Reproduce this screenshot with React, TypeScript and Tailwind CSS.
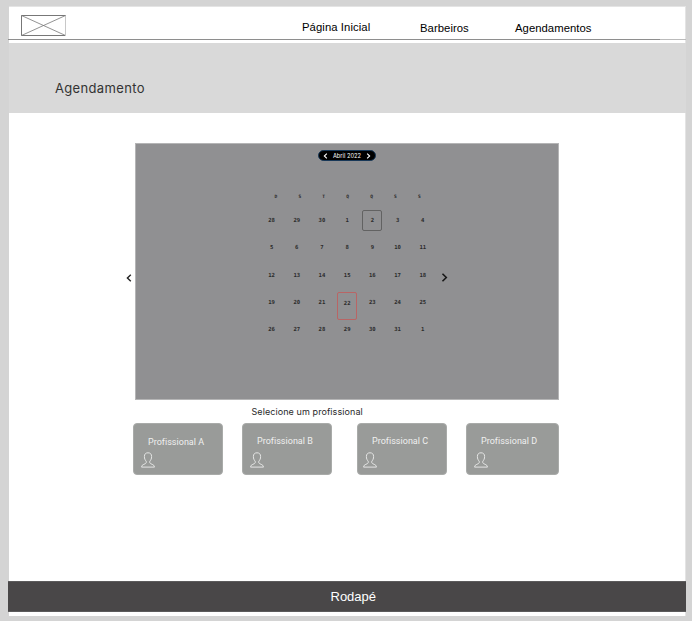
const sans = "font-['Liberation_Sans',Arial,sans-serif]";
const round = "font-[Inter,sans-serif]";

const weekdays = ["D", "S", "T", "Q", "Q", "S", "S"];
const weeks = [
  [28, 29, 30, 1, 2, 3, 4],
  [5, 6, 7, 8, 9, 10, 11],
  [12, 13, 14, 15, 16, 17, 18],
  [19, 20, 21, 22, 23, 24, 25],
  [26, 27, 28, 29, 30, 31, 1],
];

function Chevron({ dir, className, width = 1.4 }: { dir: "left" | "right"; className: string; width?: number }) {
  return (
    <svg viewBox="0 0 6 8" className={className} fill="none" stroke="currentColor" strokeWidth={width}>
      <path d={dir === "left" ? "M4.8 0.7 1.4 4 4.8 7.3" : "M1.2 0.7 4.6 4 1.2 7.3"} />
    </svg>
  );
}

function Person({ className }: { className: string }) {
  return (
    <svg viewBox="0 0 14 16" className={className} fill="none" stroke="#e4e5e4" strokeWidth="1">
      <path d="M5.200 9.200C4 8 3.400 6.600 3.400 4.600 3.400 2 4.700 .8 7 .8s3.600 1.200 3.600 3.800c0 2-.6 3.400-1.800 4.600v1.600c0 1.400 4.700 1.200 4.700 4.300H.5c0-3.100 4.700-2.900 4.700-4.300z" />
    </svg>
  );
}

function Card({ name, card, label, icon }: { name: string; card: string; label: string; icon: string }) {
  return (
    <div className={`h-[52px] rounded-[4px] border border-[#a9aba9] bg-[#999b99] ${card}`}>
      <div className={`font-[Roboto,sans-serif] text-[9px] leading-3 tracking-[0.020px] whitespace-nowrap text-[#f0f0f0] ${label}`}>{name}</div>
      <Person className={`h-4 w-3.5 ${icon}`} />
    </div>
  );
}

export default function App() {
  return (
    <div className="h-[621px] w-[692px] overflow-hidden bg-[#d4d4d4] pt-[6px]">
      <div className="ml-[9px] flex h-[610px] w-[677px] flex-col border-t border-r border-[#e4e4e4] bg-white">
        <header className={`-ml-px flex h-8 shrink-0 items-start text-[11.300px] leading-4 text-black ${sans}`}>
          <svg viewBox="0 0 45 22" className="mt-2 ml-[13px] h-[22px] w-[45px]" fill="none">
            <path d="M.5 .5 44.500 20.500M44.500 .5 .5 20.500" stroke="#777" strokeWidth=".8" />
            <path d="M.5 .5H44.500M.5 20.500H44.500M.5 .5V20.500" stroke="#777" />
            <path d="M44.500 1V21" stroke="#c8c8c8" />
          </svg>
          <nav className="flex pt-3">
            <a className="ml-[236px] w-[118px] tracking-[0.080px] whitespace-nowrap">Página Inicial</a>
            <a className="w-[95px] pt-px tracking-[0.050px]">Barbeiros</a>
            <a className="pt-px tracking-[0.040px]">Agendamentos</a>
          </nav>
        </header>
        <div className="-ml-px flex h-px w-[678px] shrink-0">
          <div className="w-[652px] bg-[#8e8e8e]" />
          <div className="flex-1 bg-[#bbbbbb]" />
        </div>
        <section className="mt-[3px] h-[70px] w-[677px] shrink-0 bg-[#d9d9d9] pt-[36px] pl-[46px]">
          <h1 className={`text-[13px] leading-[18px] tracking-[0.340px] text-[#333333] ${round}`}>Agendamento</h1>
        </section>

        <main className="flex h-[468px] shrink-0 flex-col">
          <div className="mt-[30px] flex h-[258px] items-start">
            <Chevron dir="left" className="mt-[131px] mr-[3px] ml-[117px] h-2 w-[6px] text-[#222]" />
            <div className="flex h-[257px] w-[424px] flex-col border border-[#b5b5b6] bg-[#909092]">
              <div className="mt-[6px] ml-[182px] flex h-[11px] w-[58px] items-center justify-between rounded-full border border-[#183858] bg-black px-1 text-white">
                <Chevron dir="left" className="h-[6px] w-[5px]" width={1.400} />
                <span className={`text-[5.700px] leading-[8px] tracking-[0.020px] ${round}`}>Abril 2022</span>
                <Chevron dir="right" className="h-[6px] w-[5px]" width={1.400} />
              </div>
              <div className="mt-8 ml-[128px] grid h-[8px] w-[167.300px] grid-cols-7 text-center font-['DejaVu_Sans_Mono',monospace] text-[4.600px] leading-[8px] font-bold text-[#292929]">
                {weekdays.map((day, i) => (
                  <span key={i}>{day}</span>
                ))}
              </div>
              <div className="flex">
                <div className="mt-[6px] ml-[123px] grid w-[176.400px] grid-cols-7 text-center font-['DejaVu_Sans_Mono',monospace] text-[5.600px] font-bold text-[#2b2b2b]">
                  {weeks.flat().map((day, i) => (
                    <div key={i} className="flex h-[27.250px] justify-center pt-[3px]">
                      <span
                        className={
                          i === 4
                            ? "h-[21px] w-5 shrink-0 rounded-[2px] border border-[#626262] leading-[19px]"
                            : i === 24
                              ? "h-[28px] w-[19.500px] shrink-0 rounded-[2px] border border-[#b96565] leading-[20px]"
                              : "h-[21px] leading-[21px]"
                        }
                      >
                        {day}
                      </span>
                    </div>
                  ))}
                </div>
                <Chevron dir="right" className="mt-[72px] ml-[6px] h-[9px] w-[7px] text-[#171717]" />
              </div>
            </div>
          </div>
          <p className={`mt-[5px] ml-[242.500px] text-[9px] leading-3 tracking-[0.080px] text-[#292929] ${round}`}>Selecione um profissional</p>
          <div className="mt-[5px] ml-[123.500px] flex items-start">
            <Card name="Profissional A" card="w-[90px]" label="mt-[12px] ml-[14.500px]" icon="mt-[4px] ml-[7px]" />
            <Card name="Profissional B" card="ml-[19px] w-[90px]" label="mt-[11px] ml-[14.500px]" icon="mt-[5px] ml-[7px]" />
            <Card name="Profissional C" card="ml-[25px] w-[90px]" label="mt-[11px] ml-[14.500px]" icon="mt-[5px] ml-[5px]" />
            <Card name="Profissional D" card="ml-[19px] w-[93px]" label="mt-[11px] ml-[14.500px]" icon="mt-[5px] ml-[7.500px]" />
          </div>
        </main>

        <footer className={`-ml-px h-[31px] w-[678px] shrink-0 border-y border-[#5c5b5c] bg-[#494748] pt-[5px] pl-[322.500px] text-[13px] leading-[20px] text-white ${sans}`}>
          Rodapé
        </footer>
      </div>
    </div>
  );
}
